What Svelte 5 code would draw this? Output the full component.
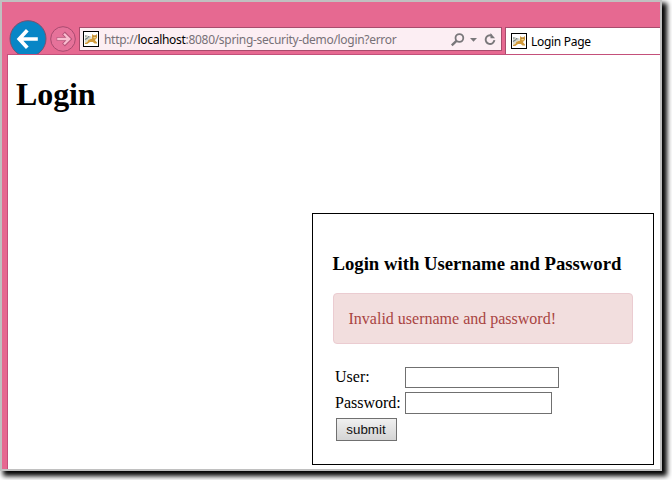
<script>
  let user = $state('');
  let password = $state('');
</script>

{#snippet favicon()}
  <svg class="fav" width="16" height="16" viewBox="0 0 16 16">
    <rect x=".5" y=".5" width="15" height="15" fill="#fff" stroke="#000" />
    <path d="M2 4.5L4 4l2 1.5L8 5l1 2-3 1.5L3.5 11 2 12z" fill="#d9dacb" />
    <path d="M2 5h1.5M5 5.4l1.5.6M2 8.5l2-1.2 1.2-1" fill="none" stroke="#6f7d88" stroke-width="1.1" />
    <path d="M9 3l1.5 1.2h2L14 3v4l-1.2 1-.8 1.2 2 2.3v1h-2.4L9.8 11H7l-2.8 2H2v-1l2.2-1 1.3-2.2L9 7.6z" fill="#d19a3b" />
    <path d="M10.2 5.9h3l-.7 1.4h-1.5z" fill="#f1d389" />
    <path d="M10.3 5.2h.8M12.4 5.2h.8" stroke="#6f5b36" stroke-width=".6" />
  </svg>
{/snippet}

<div class="desktop">
<div class="window">
  <header>
    <svg class="nav" width="76" height="52" viewBox="2 2 76 52">
      <circle cx="28" cy="38.7" r="18" fill="#0786c6" stroke="#765270" />
      <path d="M37.8 39H20M27.3 30.2L19.2 39l8.1 8.8" fill="none" stroke="#fff" stroke-width="3.7" />
      <circle cx="63" cy="39" r="12.3" fill="#e6729a" stroke="#a94b70" />
      <path d="M56.7 39H68M63.5 33l6 6-6 6" fill="none" stroke="#b55378" stroke-width="4" />
      <path d="M57.2 39H68M64 33.7l5.3 5.3-5.3 5.3" fill="none" stroke="#f9bdd0" stroke-width="2.3" />
    </svg>
    <div class="address">
      {@render favicon()}
      <span class="url">http://<b>localhost</b>:8080/spring-security-demo/login?error</span>
      <svg class="tools" width="48" height="16" viewBox="450 31 48 16">
        <circle cx="459.4" cy="38" r="3.9" fill="none" stroke="#79777a" stroke-width="1.8" />
        <path d="M456.7 40.7L451.8 45.3" stroke="#79777a" stroke-width="2.4" />
        <path d="M470 38h7l-3.5 3.8z" fill="#79777a" />
        <path d="M491.8 35.6A4.4 4.4 0 1 0 494.4 40.2" fill="none" stroke="#79777a" stroke-width="1.9" />
        <path d="M490.5 33v5.2H495z" fill="#79777a" />
      </svg>
    </div>
    <div class="tab">{@render favicon()}<span>Login Page</span></div>
  </header>
  <main>
    <h1>Login</h1>
    <section>
      <h3>Login with Username and Password</h3>
      <div class="error">Invalid username and password!</div>
      <form onsubmit={(e) => e.preventDefault()}>
        <label for="user">User:</label>
        <input id="user" type="text" bind:value={user} />
        <label for="password">Password:</label>
        <input id="password" type="password" bind:value={password} />
        <button>submit</button>
      </form>
    </section>
  </main>
</div>
</div>

<style>
  :global(body) { background: #fff; }
  .desktop { height: 480px; overflow: hidden; }
  .window {
    box-sizing: border-box;
    width: 662px;
    height: 471px;
    border: 2px solid #c0c0c0;
    background: #e66991;
    display: flex;
    flex-direction: column;
    box-shadow: 4px 4px 5px 1px #000;
    font-family: "Liberation Serif", "Times New Roman", serif;
    color: #000;
  }
  header {
    height: 52px;
    flex: none;
    display: flex;
    align-items: flex-start;
    font: 12px/16px "Noto Sans", "Open Sans", sans-serif;
  }
  .nav { flex: none; display: block; }
  .fav { flex: none; display: block; }
  .address {
    box-sizing: border-box;
    width: 423px;
    height: 24px;
    margin: 25px 3px 0 1px;
    border: 1px solid #a84c6d;
    background: #fceef3;
    display: flex;
    align-items: center;
    padding: 0 3px;
    flex: none;
  }
  .url { margin-left: 5px; padding-top: 2px; color: #777177; flex: 1; white-space: nowrap; letter-spacing: -.3px; }
  .url b { font-weight: 400; color: #000; }
  .tools { display: block; flex: none; }
  .tab {
    box-sizing: border-box;
    flex: 1;
    height: 27px;
    margin-top: 25px;
    border-top: 1px solid #a84c6d;
    border-left: 1px solid #a84c6d;
    background: #fff;
    display: flex;
    padding: 5px 0 0 5px;
    gap: 4px;
  }
  .tab span { white-space: nowrap; letter-spacing: -.3px; padding-top: 1px; }
  main {
    flex: 1;
    margin-left: 5px;
    border-left: 1px solid #c4507a;
    border-top: 1px solid #c4507a;
    background: #fff;
  }
  h1 { margin: 21px 8px 0; font-size: 32px; line-height: 37px; letter-spacing: -.1px; }
  section {
    box-sizing: border-box;
    width: 342px;
    height: 252px;
    margin: 100px 6px 0 auto;
    border: 1px solid #000;
    padding: 20px;
  }
  h3 { margin: 19px 0 19px -.5px; font-size: 18.72px; line-height: 21px; white-space: nowrap; }
  .error {
    box-sizing: border-box;
    height: 51px;
    padding: 15px 15px 15px 14.5px;
    border: 1px solid #ebccd1;
    border-radius: 4px;
    background: #f2dede;
    color: #a94442;
    font-size: 16px;
    line-height: 20px;
  }
  form {
    display: grid;
    grid-template-columns: 69px auto;
    grid-template-rows: 21px 22px 23px;
    row-gap: 4px;
    margin: 23px 0 0 3px;
    justify-content: start;
    align-items: center;
    font-size: 16px;
    line-height: 20px;
  }
  input {
    box-sizing: border-box;
    width: 154px;
    height: 100%;
    border: 1px solid #707070;
    background: #fff;
    padding: 1px 3px;
    outline: none;
  }
  #password { width: 147px; }
  label { margin: 0 0 1px -1px; }
  button {
    width: 61px;
    height: 23px;
    padding: 0 1px 0 0;
    border: 1px solid #707070;
    background: linear-gradient(#f0f0f0, #d4d4d4);
    color: #111;
    font: 13.33px "Liberation Sans", Arial, sans-serif;
  }
</style>
